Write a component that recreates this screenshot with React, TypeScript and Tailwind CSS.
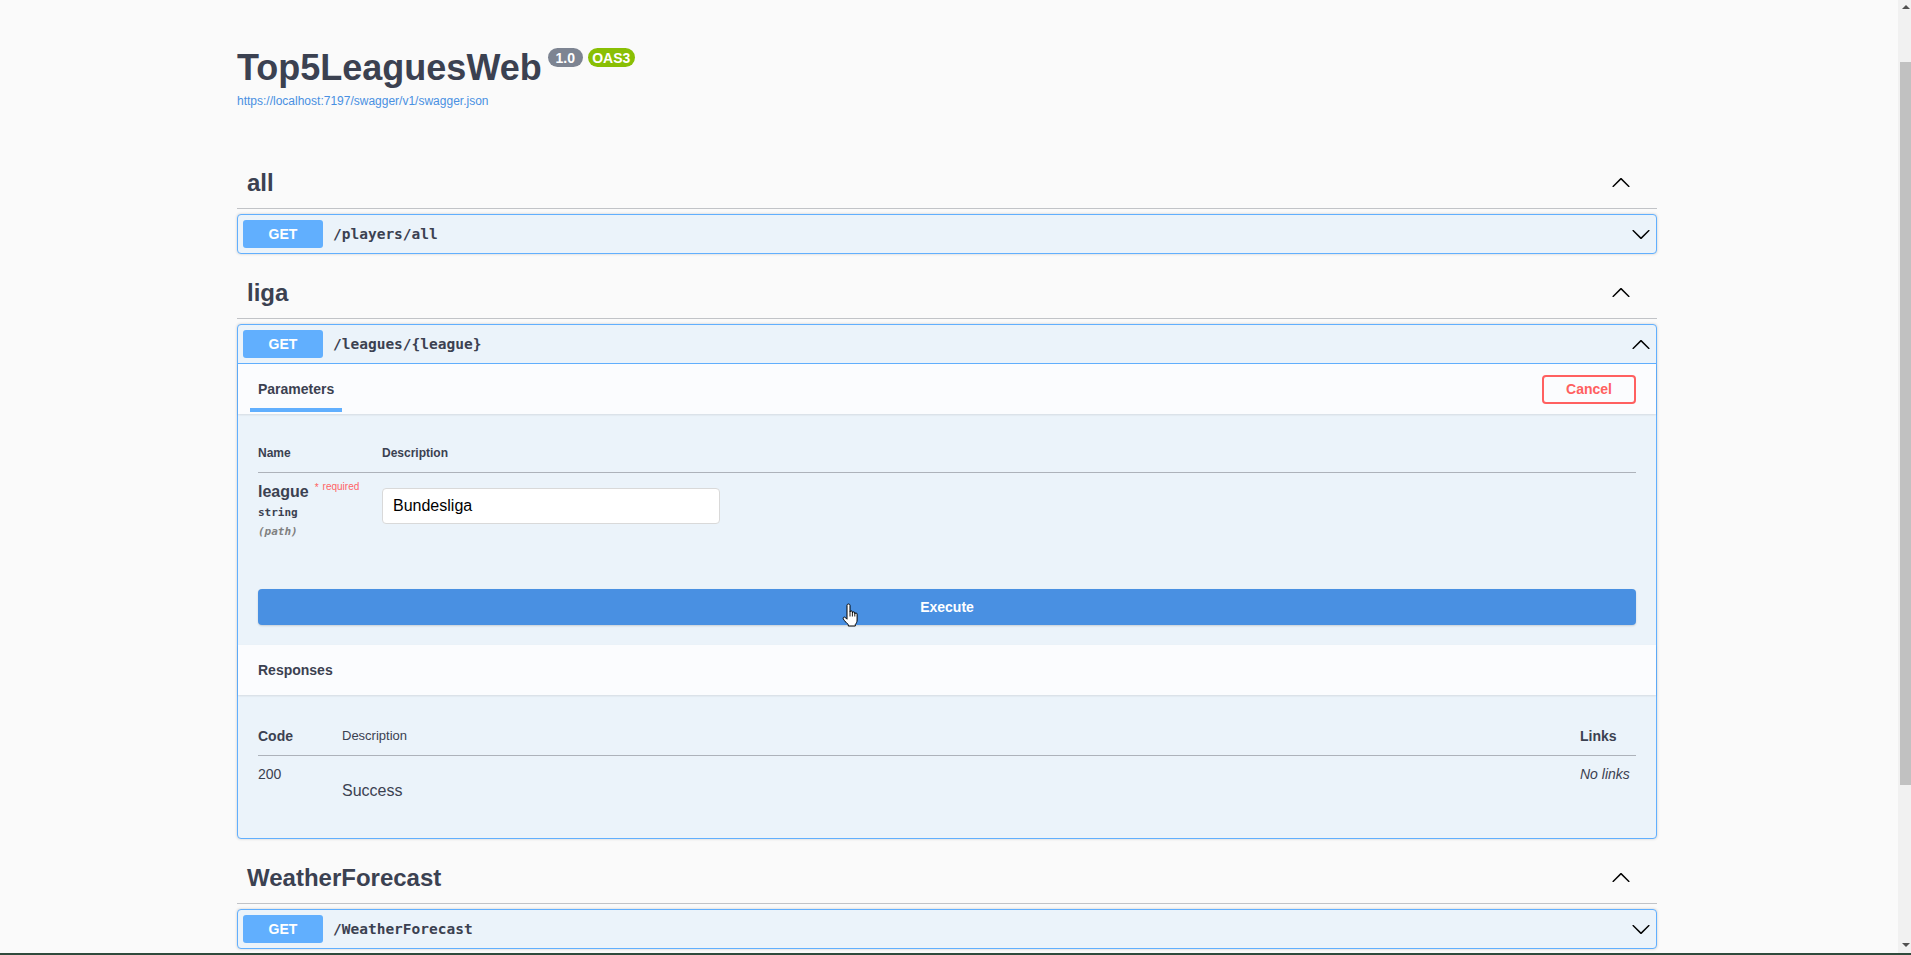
import React from "react";

function ChevronUp({ className }: { className?: string }) {
  return (
    <svg viewBox="0 0 20 20" className={className} fill="#000">
      <path d="M17.418 14.908c.272.268.709.268.979 0s.271-.701 0-.969l-7.908-7.83c-.27-.268-.707-.268-.979 0l-7.908 7.83c-.27.268-.27.701 0 .969.271.268.709.268.979 0L10 7.767l7.418 7.141z" />
    </svg>
  );
}

function ChevronDown({ className }: { className?: string }) {
  return (
    <svg viewBox="0 0 20 20" className={className} fill="#000">
      <path d="M17.418 6.109c.272-.268.709-.268.979 0s.271.701 0 .969l-7.908 7.83c-.27.268-.707.268-.979 0l-7.908-7.83c-.27-.268-.27-.701 0-.969.271-.268.709-.268.979 0L10 13.25l7.418-7.141z" />
    </svg>
  );
}

function HandCursor() {
  return (
    <svg viewBox="0 0 19 24" className="h-[24px] w-[19px]">
      <path
        d="M5 2.5C5 1.5 5.7 1 6.5 1C7.3 1 8 1.5 8 2.5V9C8 8.3 8.6 7.9 9.2 7.9C9.9 7.9 10.4 8.3 10.4 9V10C10.4 9.3 11 8.9 11.6 8.9C12.3 8.9 12.8 9.3 12.8 10V11C12.8 10.4 13.3 10 13.9 10C14.6 10 15.1 10.4 15.1 11.1V17C15.1 19 14.3 20.4 13.3 21.5V23H6.3V21.6C5.3 20.8 2.2 17.6 1.4 16.1C0.9 15.1 1.3 14.2 2.1 14.1C2.8 14 3.6 14.7 5 16.2Z"
        fill="#fff"
        stroke="#000"
        strokeWidth="1"
        strokeLinejoin="round"
      />
      <path d="M8 9V13.5M10.4 10V13.5M12.8 11V13.5" stroke="#000" strokeWidth="0.9" fill="none" />
    </svg>
  );
}

function TagHeading({ title }: { title: string }) {
  return (
    <div className="flex h-[50px] items-center justify-between border-b border-[#c1c3c7] pl-[10px] pr-[26px]">
      <h3 className="-mt-[1px] text-[24px] font-bold leading-[28px] text-[#3b4151]">{title}</h3>
      <ChevronUp className="-mt-[4px] h-5 w-5" />
    </div>
  );
}

function Summary({ path, open }: { path: string; open?: boolean }) {
  return (
    <div
      className={
        open
          ? "flex h-[39px] items-center border-b border-[#61affe] px-[5px]"
          : "flex h-[38px] items-center px-[5px]"
      }
    >
      <span className="flex h-[28px] w-[80px] items-center justify-center rounded-[3px] bg-[#61affe] text-[14px] font-bold text-white">
        GET
      </span>
      <span className="pl-[10px] pt-[1px] font-['DejaVu_Sans_Mono',monospace] text-[14.5px] font-bold text-[#3b4151]">
        {path}
      </span>
      {open ? <ChevronUp className="ml-auto h-5 w-5" /> : <ChevronDown className="ml-auto h-5 w-5" />}
    </div>
  );
}

function Scrollbar() {
  return (
    <div className="flex w-[17px] shrink-0 bg-[#fafafa] pl-[4px]">
      <div className="flex h-full w-[13px] flex-col bg-[#f1f1f1]">
        <div className="flex h-[14px] items-center justify-center pl-[2px]">
          <div className="h-0 w-0 border-x-[4px] border-b-[4px] border-x-transparent border-b-[#505050]" />
        </div>
        <div className="ml-[2px] mt-[48px] h-[723px] bg-[#c1c1c1]" />
        <div className="flex-1" />
        <div className="flex h-[14px] items-center justify-center pb-[2px] pl-[2px]">
          <div className="h-0 w-0 border-x-[4px] border-t-[4px] border-x-transparent border-t-[#505050]" />
        </div>
      </div>
    </div>
  );
}

export default function App() {
  return (
    <div className="flex h-[955px] w-full flex-col overflow-hidden bg-[#fafafa] font-['Liberation_Sans',Arial,sans-serif] text-[#3b4151]">
      <div className="flex min-h-0 flex-1">
        <div className="min-w-0 flex-1 overflow-hidden">
          <div className="mx-auto w-[1420px]">
            {/* Info */}
            <div className="pt-[46px]">
              <div className="flex items-start">
                <h2 className="text-[36px] font-bold leading-[43px] text-[#3b4151]">Top5LeaguesWeb</h2>
                <span className="ml-[6px] mt-[2px] flex h-[19px] w-[35px] items-center justify-center rounded-full bg-[#7d8492] text-[14px] font-bold leading-none text-white">
                  1.0
                </span>
                <span className="ml-[5px] mt-[2px] flex h-[19px] w-[47px] items-center justify-center rounded-full bg-[#89bf04] text-[14px] font-bold leading-none text-white">
                  OAS3
                </span>
              </div>
              <div className="mt-[4px] text-[12px] leading-[16px] text-[#4990e2]">
                https://localhost:7197/swagger/v1/swagger.json
              </div>
            </div>

            {/* all */}
            <div className="mt-[50px]">
              <TagHeading title="all" />
              <div className="mb-[15px] mt-[5px] rounded-[4px] border border-[#61affe] bg-[#ebf3fa] shadow-[0_0_3px_rgba(0,0,0,0.19)]">
                <Summary path="/players/all" />
              </div>
            </div>

            {/* liga */}
            <div>
              <TagHeading title="liga" />
              <div className="mb-[15px] mt-[5px] rounded-[4px] border border-[#61affe] bg-[#ebf3fa] shadow-[0_0_3px_rgba(0,0,0,0.19)]">
                <Summary path="/leagues/{league}" open />

                {/* Parameters header */}
                <div className="relative z-[1] flex h-[50px] items-center justify-between bg-[#fbfcfe] px-5 shadow-[0_1px_2px_rgba(0,0,0,0.1)]">
                  <div className="relative">
                    <span className="block text-[14px] font-bold leading-[17px] text-[#3b4151]">Parameters</span>
                    <div className="absolute left-[-8px] right-[-8px] top-[27px] h-[4px] bg-[#61affe]" />
                  </div>
                  <button className="flex h-[29px] w-[94px] items-center justify-center rounded-[4px] border-2 border-[#ff6060] bg-transparent text-[14px] font-bold text-[#ff6060]">
                    Cancel
                  </button>
                </div>

                {/* Parameters table */}
                <div className="px-5 pb-5 pt-5">
                  <div className="flex border-b border-[#adb2ba] py-3 text-[12px] font-bold leading-[14px] text-[#3b4151]">
                    <div className="w-[124px]">Name</div>
                    <div>Description</div>
                  </div>
                  <div className="flex py-[10px]">
                    <div className="w-[124px]">
                      <div className="flex items-start">
                        <span className="text-[16px] font-bold leading-[18px] text-[#3b4151]">league</span>
                        <span className="ml-[6px] mt-[-1px] text-[10px] leading-[12px] text-[#ff5d5d]">*</span>
                        <span className="ml-[4px] mt-[-2px] text-[10px] leading-[12px] text-[#ff6466]">required</span>
                      </div>
                      <div className="py-[5px] font-['DejaVu_Sans_Mono',monospace] text-[11px] font-bold leading-[14px] text-[#3b4151]">
                        string
                      </div>
                      <div className="font-['DejaVu_Sans_Mono',monospace] text-[11px] font-bold italic leading-[14px] text-[#808080]">
                        (path)
                      </div>
                    </div>
                    <div>
                      <div className="mt-[5px] flex h-[36px] w-[338px] items-center rounded-[4px] border border-[#d9d9d9] bg-white px-[10px] text-[16px] text-[#000]">
                        Bundesliga
                      </div>
                    </div>
                  </div>
                </div>

                {/* Execute */}
                <div className="px-5 pb-5 pt-5">
                  <div className="relative flex h-[36px] w-full items-center justify-center rounded-[4px] bg-[#4990e2] text-[14px] font-bold text-white shadow-[0_1px_2px_rgba(0,0,0,0.15)]">
                    Execute
                    <div className="absolute left-[584px] top-[14px]">
                      <HandCursor />
                    </div>
                  </div>
                </div>

                {/* Responses header */}
                <div className="relative z-[1] flex h-[50px] items-center bg-[#fbfcfe] px-5 shadow-[0_1px_2px_rgba(0,0,0,0.1)]">
                  <span className="text-[14px] font-bold leading-[17px] text-[#3b4151]">Responses</span>
                </div>

                {/* Responses table */}
                <div className="px-5 pb-[38px] pt-[22px]">
                  <div className="flex items-center border-b border-[#adb2ba] py-3 leading-[14px] text-[#3b4151]">
                    <div className="w-[84px] text-[14px] font-bold">Code</div>
                    <div className="flex-1 text-[13px]">Description</div>
                    <div className="w-[56px] text-[14px] font-bold">Links</div>
                  </div>
                  <div className="flex pt-[10px]">
                    <div className="w-[84px] text-[14px] leading-[16px]">200</div>
                    <div className="flex-1 pt-[16px] text-[16px] leading-[18px]">Success</div>
                    <div className="w-[56px] text-[14px] italic leading-[16px]">No links</div>
                  </div>
                </div>
              </div>
            </div>

            {/* WeatherForecast */}
            <div>
              <TagHeading title="WeatherForecast" />
              <div className="mb-[15px] mt-[5px] rounded-[4px] border border-[#61affe] bg-[#ebf3fa] shadow-[0_0_3px_rgba(0,0,0,0.19)]">
                <Summary path="/WeatherForecast" />
              </div>
            </div>
          </div>
        </div>
        <Scrollbar />
      </div>
      <div className="h-[2px] shrink-0 bg-[#2f4a3c]" />
    </div>
  );
}
